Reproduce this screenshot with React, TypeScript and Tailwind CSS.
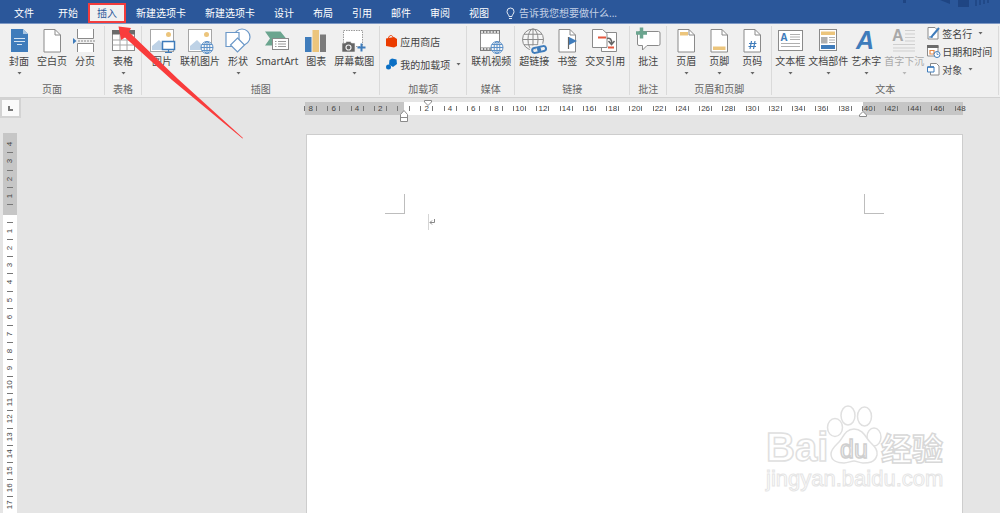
import { clsx } from 'clsx'
import type { ReactNode } from 'react'

const GREY = '#8a8a8a'
const BLUE = '#3f7cbb'
const YELLOW = '#ecc57c'
const GREEN = '#6ba58f'
const RED = '#e4573d'

function Icon({ children }: { children: ReactNode }) {
  return (
    <svg viewBox="0 0 24 24" className="h-6 w-6 overflow-visible" fill="none" aria-hidden="true">
      {children}
    </svg>
  )
}

function Sheet({ children }: { children?: ReactNode }) {
  return (
    <Icon>
      <path d="M4 .5h11l5.500 5.500v17H4z" fill="#fff" stroke={GREY} />
      <path d="M15 .5V6h5.500" stroke={GREY} />
      {children}
    </Icon>
  )
}

function Globe({ cx, cy, r, color }: { cx: number; cy: number; r: number; color: string }) {
  return (
    <g stroke={color}>
      <circle cx={cx} cy={cy} r={r} fill="#f6f6f6" />
      <ellipse cx={cx} cy={cy} rx={r * 0.48} ry={r} />
      <path d={`M${cx - r} ${cy}h${2 * r}M${cx} ${cy - r}v${2 * r}`} />
      <path d={`M${cx - r * 0.86} ${cy - r * 0.5}h${r * 1.72}M${cx - r * 0.86} ${cy + r * 0.5}h${r * 1.72}`} />
    </g>
  )
}

function Photo({ children }: { children: ReactNode }) {
  return (
    <Icon>
      <rect x=".5" y=".5" width="23" height="22" fill="#fff" stroke="#a6a6a6" />
      <path d="M2 21v-4l7-6 6 6v4z" fill="#bed2e6" />
      <circle cx="18.500" cy="5.500" r="2.500" fill={YELLOW} />
      {children}
    </Icon>
  )
}

const icons = {
  cover: (
    <Icon>
      <path d="M4 0h12l5 5v18H4z" fill={BLUE} />
      <path d="M16 0v5h5" fill="#a9c6e2" />
      <path d="M7 9.500h11M7 12.500h11M10 15.500h5" stroke="#d5e4f2" />
    </Icon>
  ),
  blank: <Sheet />,
  pageBreak: (
    <Icon>
      <path d="M4.500 0v9.500h16V0M4.500 23v-8.500h16V23" fill="#fff" stroke={GREY} />
      <path d="M5 12h17" stroke={GREY} strokeDasharray="2 1" />
      <path d="M0 9l3.500 3L0 15z" fill={BLUE} />
    </Icon>
  ),
  table: (
    <Icon>
      <rect x="1.500" y="1.500" width="22" height="20" fill="#fff" stroke={GREY} />
      <path d="M1 1h23v4.500H1z" fill="#6b6b6b" />
      <path d="M9 5v16M16 5v16M1.500 11h22M1.500 16h22" stroke="#a6a6a6" />
    </Icon>
  ),
  picture: (
    <Photo>
      <rect x="12.500" y="12.500" width="12" height="8" fill="#fff" stroke={BLUE} strokeWidth="1.500" />
      <path d="M18.500 20.500v3M15 23.500h7" stroke={BLUE} strokeWidth="1.200" />
    </Photo>
  ),
  onlinePicture: (
    <Photo>
      <Globe cx={19} cy={18.5} r={6} color="#5b90c8" />
    </Photo>
  ),
  shapes: (
    <Icon>
      <g fill="#fff" stroke="#6b98c8" strokeWidth="1.200">
        <circle cx="16" cy="8" r="8" />
        <path d="M0 3.500h13v14H0z" />
        <path d="M11.500 9l7 7-7 7-7-7z" />
      </g>
    </Icon>
  ),
  smartArt: (
    <Icon>
      <path d="M0 2.500h15.500l6 7.500-6 6.500H0l5-7z" fill={GREEN} />
      <rect x="7.500" y="9.500" width="16" height="11" fill="#fff" stroke={GREY} />
      <path d="M10 12.500h1.500M13 12.500h8M10 15h1.500M13 15h8M10 17.500h1.500M13 17.500h8" stroke="#9a9a9a" />
    </Icon>
  ),
  chart: (
    <Icon>
      <path d="M1 8h6.500v15H1z" fill={BLUE} />
      <path d="M8.500 1h6.500v22H8.500z" fill={YELLOW} />
      <path d="M16 5.500h6V23h-6z" fill="#7b7b7b" />
    </Icon>
  ),
  screenshot: (
    <Icon>
      <rect x="1.500" y="1.500" width="19" height="16" fill="#fff" stroke="#9a9a9a" strokeDasharray="1.500 1" />
      <path d="M0 14h3.500l1-1.500h4l1 1.500H13v9H0z" fill="#666" stroke="#f0f0f0" strokeWidth=".6" />
      <circle cx="6.500" cy="18.500" r="2.500" stroke="#f0f0f0" strokeWidth="1.200" />
      <path d="M19.500 14.500v8M15.500 18.500h8" stroke={BLUE} strokeWidth="2" />
    </Icon>
  ),
  video: (
    <Icon>
      <rect x="1.500" y="1.500" width="19" height="20" fill="#fff" stroke={GREY} />
      <path d="M1 3h20M1 20h20" stroke="#777" strokeWidth="3" />
      <path d="M2 3h18M2 20h18" stroke="#fff" strokeWidth="1.500" strokeDasharray="2 1.200" />
      <Globe cx={18} cy={18.5} r={6} color="#5b90c8" />
    </Icon>
  ),
  hyperlink: (
    <Icon>
      <Globe cx={11} cy={10.5} r={10.5} color={GREY} />
      <g strokeWidth="4.500" stroke="#f0f0f0">
        <rect x="10" y="18.500" width="8" height="5" rx="2.500" />
        <rect x="16" y="17" width="8" height="5" rx="2.500" />
      </g>
      <g strokeWidth="2" stroke={BLUE} transform="rotate(-12 17 20)">
        <rect x="10" y="18" width="8" height="5" rx="2.500" />
        <rect x="16" y="18" width="8" height="5" rx="2.500" />
      </g>
    </Icon>
  ),
  bookmark: (
    <Sheet>
      <path d="M13.500 8v12" stroke="#666" strokeWidth="1.200" />
      <path d="M14 8l8 4-8 4z" fill={BLUE} />
    </Sheet>
  ),
  crossRef: (
    <Icon>
      <path d="M8.500 3.500h15v19h-15z" fill="#fff" stroke={GREY} />
      <path d="M-.5.5h10l4.500 4v14H-.5z" fill="#fff" stroke={GREY} />
      <path d="M5 8.500h8M15 18.500h6" stroke={RED} strokeWidth="2" />
      <path d="M14 9.500c3-1 5 1 4.500 5M15.500 12l3 3.500 3-3.500" stroke="#666" strokeWidth="1.500" />
    </Icon>
  ),
  comment: (
    <Icon>
      <path d="M3 2.500h19.500q1.500 0 1.500 1.500v11q0 1.500-1.500 1.500H11L6.500 21v-4.500H3Q1.500 16.500 1.500 15V4z" fill="#fff" stroke={GREY} />
      <path d="M5.500-1.500v11M0 4h11" stroke={GREEN} strokeWidth="3.500" />
    </Icon>
  ),
  header: (
    <Sheet>
      <path d="M6 3h8v3.500H6z" fill={YELLOW} />
    </Sheet>
  ),
  footer: (
    <Sheet>
      <path d="M6 17.500h12.500V21H6z" fill={YELLOW} />
    </Sheet>
  ),
  pageNumber: (
    <Sheet>
      <path d="M11.500 12l-1.500 8M15 12l-1.500 8M9 14.500h7.500M8.500 17.500H16" stroke={BLUE} strokeWidth="1.200" />
    </Sheet>
  ),
  textBox: (
    <Icon>
      <rect x=".5" y="1.500" width="24" height="20" fill="#fff" stroke={GREY} />
      <text x="2.500" y="12" fontSize="10" fontWeight="700" fill={BLUE}>A</text>
      <path d="M12 5.500h10M12 8h10M12 10.500h10M3 14.500h19M3 17.500h19" stroke="#b0b0b0" />
    </Icon>
  ),
  quickParts: (
    <Icon>
      <rect x="3.500" y=".5" width="17" height="21" fill="#fff" stroke={GREY} />
      <path d="M5 2.500h14V6H5z" fill={YELLOW} />
      <path d="M5 8h6.500v6.500H5z" fill="#b0b0b0" />
      <path d="M13 8.500h6M13 11h6M13 13.500h6" stroke="#b0b0b0" />
      <path d="M5 16h14v4H5z" fill={BLUE} />
    </Icon>
  ),
  wordArt: (
    <Icon>
      <text x="2" y="20" fontSize="25" fontWeight="700" fontStyle="italic" fontFamily="Liberation Sans" fill={BLUE}>A</text>
    </Icon>
  ),
  dropCap: (
    <Icon>
      <text x="0" y="12" fontSize="16" fontWeight="700" fontFamily="Liberation Sans" fill="#a8a8a8">A</text>
      <path d="M13 1.500h10M13 5h10M13 8.500h10M13 12h10M1 15.500h22M1 19h22M1 22h22" stroke="#cfcfcf" />
    </Icon>
  ),
}

function Caret({ className }: { className?: string }) {
  return (
    <svg viewBox="0 0 5 3" className={clsx('h-[3px] w-[5px] shrink-0 opacity-80', className)} fill="currentColor" aria-hidden="true">
      <path d="M.5 0h4l-2 2.500z" />
    </svg>
  )
}

interface ToolProps {
  icon: ReactNode
  label: string
  menu?: boolean
  disabled?: boolean
}

function Tool({ icon, label, menu, disabled }: ToolProps) {
  return (
    <button
      type="button"
      disabled={disabled}
      className={clsx('flex flex-col items-center', disabled ? 'text-[#a9a9a9]' : 'text-[#444]')}
    >
      {icon}
      <span className="mt-0.5 text-[10px] leading-3 whitespace-nowrap">{label}</span>
      {menu && <Caret className="mt-[5px]" />}
    </button>
  )
}

function SmallTool({ icon, label, menu }: ToolProps) {
  return (
    <button type="button" className="flex items-center gap-0.5 text-[10px] leading-3 whitespace-nowrap text-[#444]">
      <svg viewBox="0 0 13 13" className="h-[13px] w-[13px] overflow-visible" fill="none" aria-hidden="true">
        {icon}
      </svg>
      {label}
      {menu && <Caret className="ml-1" />}
    </button>
  )
}

interface GroupProps {
  title: string
  className: string
  children: ReactNode
}

function Group({ title, className, children }: GroupProps) {
  return (
    <section className="flex shrink-0 flex-col border-r border-[#dadada]" aria-label={title}>
      <div className={clsx('flex flex-1 items-start pt-[3px]', className)}>{children}</div>
      <h2 className="text-center text-[10px] leading-3 text-[#666]">{title}</h2>
    </section>
  )
}

const tabs = ['开始', '插入', '新建选项卡', '新建选项卡', '设计', '布局', '引用', '邮件', '审阅', '视图']

function TitleBar() {
  return (
    <header className="flex h-6 shrink-0 items-center border-b border-[#7d98c4] bg-[#2b579a] text-[10px] leading-3 text-white">
      <nav className="flex items-center gap-px pt-[3px] pl-[5px]">
        <button type="button" className="mr-[5px] h-5 px-[9px]">文件</button>
        {tabs.map((tab, i) => (
          <button
            key={i}
            type="button"
            className={clsx(
              'h-5 whitespace-nowrap',
              tab === '插入' ? 'border-2 border-[#f23c3c] bg-[#f0f0f0] px-[7px] text-[#2b579a]' : 'px-[9px]'
            )}
          >
            {tab}
          </button>
        ))}
      </nav>
      <label className="flex items-center gap-1 pt-[3px] pl-2 text-[#c3d0e6]">
        <svg viewBox="0 0 9 13" className="h-[13px] w-[9px]" fill="none" stroke="#e6ecf5" aria-hidden="true">
          <path d="M3 9.500C3 7.500 1 7 1 4.500a3.500 3.500 0 0 1 7 0C8 7 6 7.500 6 9.500zM3 11.500h3" />
        </svg>
        <span className="sr-only">告诉我</span>
        <input
          type="text"
          placeholder="告诉我您想要做什么..."
          className="h-5 w-[120px] bg-transparent leading-5 outline-none placeholder:text-[#c3d0e6]"
        />
      </label>
      <svg viewBox="0 0 100 8" className="ml-auto h-2 w-[100px] self-start" fill="none" aria-hidden="true">
        <path d="M3 0h3v3H3zM40 0h10v4zM58 0h11v7H58z" fill="#1f4583" />
        <path d="M76 0v6M80 0v5M84 0v4M88 0v3" stroke="#1f4583" strokeWidth="1.500" />
      </svg>
    </header>
  )
}

function Ribbon() {
  return (
    <div className="flex shrink-0 overflow-hidden border-b border-[#d2d2d2] bg-[#f0f0f0] py-0.5">
      <div className="flex h-[69px]">
        <Group title="页面" className="gap-1.5 px-[7px]">
          <Tool icon={icons.cover} label="封面" menu />
          <Tool icon={icons.blank} label="空白页" />
          <Tool icon={icons.pageBreak} label="分页" />
        </Group>
        <Group title="表格" className="px-1.5">
          <Tool icon={icons.table} label="表格" menu />
        </Group>
        <Group title="插图" className="gap-1.5 pr-[5px] pl-2">
          <Tool icon={icons.picture} label="图片" />
          <Tool icon={icons.onlinePicture} label="联机图片" />
          <Tool icon={icons.shapes} label="形状" menu />
          <Tool icon={icons.smartArt} label="SmartArt" />
          <Tool icon={icons.chart} label="图表" />
          <Tool icon={icons.screenshot} label="屏幕截图" menu />
        </Group>
        <Group title="加载项" className="px-[5px]">
          <div className="flex flex-col items-start gap-2.5 pt-1.5">
            <SmallTool
              label="应用商店"
              icon={
                <>
                  <path d="M1 3.500l8-1.500 3 2v7l-3 1.500-8-1.500z" fill="#eb3c00" />
                  <path d="M3.500 3.500C3.500 0 7.500-.5 8 2.500" stroke="#eb3c00" />
                </>
              }
            />
            <SmallTool
              label="我的加载项"
              menu
              icon={
                <>
                  <path d="M7 .5l4.500 1 .5 4.500-4 3-4-2.500L4.500 2z" fill="#0a6fc4" />
                  <circle cx="3.500" cy="9" r="2.500" fill="#0a6fc4" />
                </>
              }
            />
          </div>
        </Group>
        <Group title="媒体" className="pr-[3px] pl-1">
          <Tool icon={icons.video} label="联机视频" />
        </Group>
        <Group title="链接" className="gap-1.5 px-1">
          <Tool icon={icons.hyperlink} label="超链接" />
          <Tool icon={icons.bookmark} label="书签" />
          <Tool icon={icons.crossRef} label="交叉引用" />
        </Group>
        <Group title="批注" className="px-1.5">
          <Tool icon={icons.comment} label="批注" />
        </Group>
        <Group title="页眉和页脚" className="gap-[9px] px-[7px]">
          <Tool icon={icons.header} label="页眉" menu />
          <Tool icon={icons.footer} label="页脚" menu />
          <Tool icon={icons.pageNumber} label="页码" menu />
        </Group>
        <Group title="文本" className="gap-[3px] pr-1.5 pl-[3px]">
          <Tool icon={icons.textBox} label="文本框" menu />
          <Tool icon={icons.quickParts} label="文档部件" menu />
          <Tool icon={icons.wordArt} label="艺术字" menu />
          <Tool icon={icons.dropCap} label="首字下沉" menu disabled />
          <div className="-mt-0.5 flex flex-col items-start gap-[5px]">
            <SmallTool
              label="签名行"
              menu
              icon={
                <>
                  <path d="M1 .5h7l3 3v8.500H1z" fill="#fff" stroke={GREY} />
                  <path d="M12 1L6 8l-2 2.500" stroke={BLUE} strokeWidth="2" />
                  <path d="M2 10h4" stroke={BLUE} />
                </>
              }
            />
            <SmallTool
              label="日期和时间"
              icon={
                <>
                  <path d="M.5 1h10.500v10H.5z" fill="#fff" stroke={GREY} />
                  <path d="M0 0h11.500v3H0z" fill="#6b6b6b" />
                  <path d="M3 5.500h4v3.500H3z" stroke="#e58a4a" strokeWidth="1.200" />
                  <circle cx="10" cy="9.500" r="3" fill="#fff" stroke={BLUE} />
                  <path d="M10 7.500v2h1.500" stroke={BLUE} strokeWidth=".8" />
                </>
              }
            />
            <SmallTool
              label="对象"
              menu
              icon={
                <>
                  <path d="M3.500.5h6l2.500 2.500v9H3.500z" fill="#fff" stroke={GREY} />
                  <path d="M.5 4h6.500v5H.5z" fill="#fff" stroke={BLUE} />
                  <path d="M.5 4h6.500" stroke={BLUE} strokeWidth="1.500" />
                </>
              }
            />
          </div>
        </Group>
      </div>
    </div>
  )
}

// -8 … 48 in steps of two characters
const rulerMarks = Array.from({ length: 29 }, (_, i) => Math.abs(i * 2 - 8))

function HorizontalRuler() {
  return (
    <div className="grid h-[13px] text-[8px] leading-[13px] text-[#444] [font-family:'Liberation_Sans',sans-serif]">
      <div className="col-start-1 row-start-1 flex">
        <div className="flex-[99] bg-[#c6c6c6]" />
        <div className="relative flex-[458] bg-white">
          <svg viewBox="0 0 8 12" className="absolute top-2 -left-1 z-10 h-3 w-2" fill="#fff" stroke="#8a8a8a" aria-hidden="true">
            <path d="M.5 11.500v-7L4 .5l3.500 4v7zM.5 7.500h7" />
          </svg>
          <svg viewBox="0 0 8 6" className="absolute -top-0.5 left-5 z-10 h-1.5 w-2" fill="#fff" stroke="#8a8a8a" aria-hidden="true">
            <path d="M.5.5h7V2L4 5.500.5 2z" />
          </svg>
          <svg viewBox="0 0 8 6" className="absolute top-[9px] -right-1 z-10 h-1.5 w-2" fill="#fff" stroke="#8a8a8a" aria-hidden="true">
            <path d="M.5 5.500V4L4 .5 7.500 4v1.500z" />
          </svg>
        </div>
        <div className="flex-[100] bg-[#c6c6c6]" />
      </div>
      <div className="relative col-start-1 row-start-1 -mr-2.5 -ml-1.5 flex">
        {rulerMarks.map((n, i) => (
          <div key={i} className="flex min-w-0 flex-1 items-center justify-center">
            <span className="h-[5px] w-px bg-[#777]" />
            <span className="w-[11px] text-center">
              <span className="-mx-1">{n === 0 ? '' : n}</span>
            </span>
            <span className={clsx('h-[5px] w-px', n < 48 && 'bg-[#777]')} />
          </div>
        ))}
      </div>
    </div>
  )
}

function VerticalMark({ n, after }: { n: number; after?: boolean }) {
  return (
    <div className={clsx('flex min-h-0 flex-1 items-center', after ? 'flex-col-reverse' : 'flex-col')}>
      <span className="h-px w-1.5 shrink-0 bg-[#777]" />
      <span className="flex min-h-0 flex-1 rotate-180 items-center justify-center [writing-mode:vertical-rl]">{n}</span>
    </div>
  )
}

function VerticalRuler() {
  return (
    <div className="mt-[15px] ml-[3px] flex min-h-0 w-3.5 flex-1 flex-col text-[8px] leading-[10px] text-[#444] [font-family:'Liberation_Sans',sans-serif]">
      <div className="flex h-[82px] shrink-0 flex-col bg-[#c6c6c6] pt-[3px] pb-2.5">
        {[4, 3, 2, 1].map((n) => (
          <VerticalMark key={n} n={n} after />
        ))}
      </div>
      <div className="flex min-h-0 flex-1 flex-col bg-white pt-[7px]">
        {Array.from({ length: 17 }, (_, i) => (
          <VerticalMark key={i} n={i + 1} />
        ))}
      </div>
    </div>
  )
}

function Watermark() {
  return (
    <div className="absolute right-4 bottom-5 flex flex-col items-start">
      <svg viewBox="0 0 180 60" className="h-[60px] w-[180px] overflow-visible" fill="#fff" stroke="#e0e0e0" strokeWidth="1.500" role="img" aria-label="Baidu 经验">
        <text x="0" y="56" fontSize="40" fontWeight="700" fontFamily="Liberation Sans">Bai</text>
        <ellipse cx="69" cy="22.500" rx="7.500" ry="9" />
        <ellipse cx="82" cy="10.500" rx="7" ry="9.500" />
        <ellipse cx="98.500" cy="11.500" rx="7" ry="9.500" />
        <ellipse cx="108" cy="32" rx="7" ry="9" />
        <path d="M88 24c9 0 12 9 16 13 5 5 8 8 7 13-2 8-9 8-14 8-4 0-6-2-9-2s-6 2-10 2c-6 0-13-2-13-9 0-5 4-8 8-12 4-4 6-13 15-13z" />
        <text x="74" y="53" fontSize="25" fontFamily="Liberation Sans" stroke="#cfcfcf">du</text>
        <text x="115" y="55" fontSize="31" fontWeight="700" fontFamily="Noto Sans CJK SC" stroke="#d8d8d8">经验</text>
      </svg>
      <span className="text-[22px] leading-7 text-white [-webkit-text-stroke:1px_#e5e5e5] [font-family:'Liberation_Sans',sans-serif]">
        jingyan.baidu.com
      </span>
    </div>
  )
}

function DocumentPage() {
  return (
    <article className="relative mt-[19px] ml-px flex-1 border border-b-0 border-[#cdcdcd] bg-white px-[78px] pt-[59px]">
      <div className="flex justify-between">
        <span className="h-5 w-5 border-r border-b border-[#bdbdbd]" />
        <span className="h-5 w-5 border-b border-l border-[#bdbdbd]" />
      </div>
      <div className="ml-[43px] flex h-4 items-center border-l border-[#d5d5d5]">
        <svg viewBox="0 0 6 6" className="h-1.5 w-1.5" fill="none" stroke="#888" aria-hidden="true">
          <path d="M5.500 0v3.500H1M3 1.500l-2 2 2 2" />
        </svg>
      </div>
      <Watermark />
    </article>
  )
}

export default function App() {
  return (
    <div className="relative flex h-screen flex-col overflow-hidden bg-[#e5e5e5] [font-family:'Noto_Sans','Noto_Sans_CJK_SC',sans-serif]">
      <TitleBar />
      <Ribbon />
      <main className="flex min-h-0 flex-1">
        <div className="flex w-[21px] shrink-0 flex-col">
          <button
            type="button"
            aria-label="制表符"
            className="flex h-5 w-[21px] shrink-0 items-center justify-center border-2 border-[#d3d3d3] bg-[#fafafa]"
          >
            <span className="h-[5px] w-[5px] border-b-2 border-l-2 border-[#777]" />
          </button>
          <VerticalRuler />
        </div>
        <div className="flex min-w-0 flex-1 flex-col pt-1 pr-[37px] pl-[284px]">
          <HorizontalRuler />
          <DocumentPage />
        </div>
      </main>

      {/* callout arrow pointing at the active tab */}
      <svg viewBox="0 0 126 113" className="pointer-events-none absolute top-[26px] left-[118px] h-[113px] w-[126px]" fill="#f93c3c" aria-hidden="true">
        <path d="M.5.5L13 2l-2 4 49 47 65 59-.5.5L54 54 7 11.500 3 14z" />
      </svg>
    </div>
  )
}
